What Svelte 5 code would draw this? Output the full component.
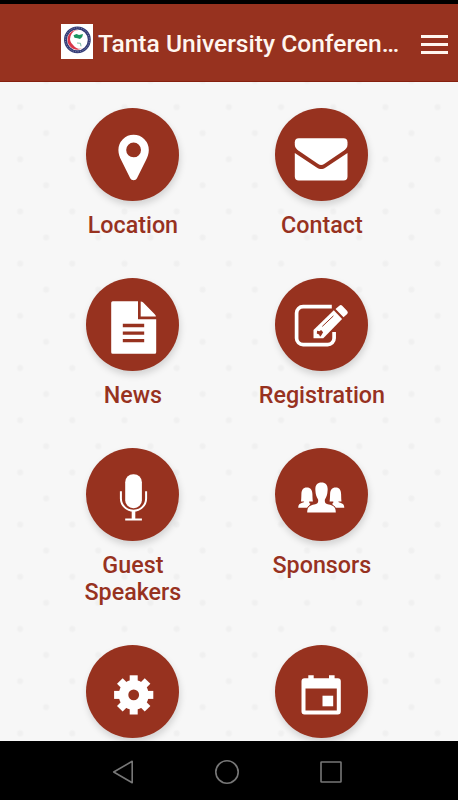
<script lang="ts">
	type Item = { label?: string; icon: string };

	const items: Item[] = [
		{ label: 'Location', icon: 'pin' },
		{ label: 'Contact', icon: 'mail' },
		{ label: 'News', icon: 'document' },
		{ label: 'Registration', icon: 'edit' },
		{ label: 'Guest Speakers', icon: 'mic' },
		{ label: 'Sponsors', icon: 'people' },
		{ icon: 'gear' },
		{ icon: 'calendar' }
	];

	const teeth = [0, 45, 90, 135];
</script>

<div class="screen">
	<div class="status"></div>
	<header>
		<svg class="logo" viewBox="0 0 32 35" aria-hidden="true">
			<rect width="32" height="35" fill="#fff" />
			<circle cx="16.4" cy="15.8" r="11.9" fill="none" stroke="#343c76" stroke-width="3" />
			<circle
				cx="16.4"
				cy="15.8"
				r="12"
				fill="none"
				stroke="#a3a8c8"
				stroke-width=".8"
				stroke-dasharray="1 1.5"
			/>
			<path
				d="M17.500 6a9.900 9.900 0 1 0 3.500 18.600a9 9 0 0 1-8.500-3.200a8.600 8.600 0 0 1 5-15.400z"
				fill="#d9364a"
			/>
			<path
				d="M12.500 11.300l3-1.200 2.500.8 4-1-.8 3-2.200 2.200-2.500-.8-3-.6z"
				fill="#1c9661"
			/>
			<path d="M16 19l3.500.3.5 3" fill="none" stroke="#55a78c" stroke-width=".8" />
		</svg>
		<h1>Tanta University Conferen…</h1>
		<button class="menu" aria-label="Menu">
			<span></span>
			<span></span>
			<span></span>
		</button>
	</header>

	<main>
		<div class="grid">
			{#each items as item (item.icon)}
				<a class="item" href="#{item.icon}">
					<span class="disc">
						<svg viewBox="-0.5 -0.5 93 93" fill="#fff" aria-hidden="true">
							{#if item.icon === 'pin'}
								<path
									fill-rule="evenodd"
									d="M31.900 41.500a15.200 15.200 0 0 1 30.400 0c0 4-1.300 7-3 10.500l-8.700 17.600c-1.500 3-5.500 3-7 0L34.900 52c-1.700-3.500-3-6.500-3-10.500zM47.100 34a7.400 7.400 0 1 0 0 14.800a7.400 7.400 0 0 0 0-14.800z"
								/>
							{:else if item.icon === 'mail'}
								<path
									d="M23.300 29.700h44.700a4 4 0 0 1 4 4v2.500c0 2.500-1.500 4.300-3.500 5.800L49 55.200c-2.500 1.600-4.200 1.600-6.700 0L22.800 42c-2-1.500-3.500-3.300-3.500-5.800v-2.500a4 4 0 0 1 4-4z"
								/>
								<path
									d="M19.300 44.400L41.200 58.900c3.300 2.200 5.700 2.200 9 0L72 44.400V68a4 4 0 0 1-4 4H23.300a4 4 0 0 1-4-4z"
								/>
							{:else if item.icon === 'document'}
								<path
									fill-rule="evenodd"
									d="M26.200 22.700h25.300v18h18.200v33.100a1.500 1.500 0 0 1-1.500 1.500h-42a1.500 1.500 0 0 1-1.500-1.500V24.200a1.500 1.500 0 0 1 1.500-1.500zM36.300 45.300v3.400h21.400v-3.400zM36.300 52.900v3.400h21.400v-3.400zM36.300 60.400v3.400h21.400v-3.400z"
								/>
								<path d="M54.200 22.900c1 0 1.800.5 2.500 1.200L68 35.400c.9.900 1.400 1.700 1.400 2.700H54.200z" />
							{:else if item.icon === 'edit'}
								<path
									d="M56.300 28.100H27.600a6.500 6.500 0 0 0-6.500 6.500v25.100a6.500 6.500 0 0 0 6.500 6.500h24.500a6.500 6.500 0 0 0 6.500-6.500v-6.200"
									fill="none"
									stroke="#fff"
									stroke-width="3.700"
								/>
								<path
									d="M63.800 27.200q1.500-1.400 2.900 0l5 5.300q1.300 1.500 0 2.900l-3.700 3.300-8-8.300z"
								/>
								<path d="M58.300 31.800l8.300 8.800L47.800 59.700H38v-8.200z" />
								<path
									d="M41.600 52.300l2.300.5 1.700-1.400 2 2.300-1.700 3-1.300 1.600-1-2.200-2.300-1.200z"
									fill="#97321f"
								/>
								<path d="M46.800 47.900L57.900 37.400" fill="none" stroke="#97321f" stroke-width="1" />
							{:else if item.icon === 'mic'}
								<rect x="38.700" y="25.700" width="16.700" height="34" rx="8" />
								<path
									d="M34.400 42.700v7.300a12.600 12.200 0 0 0 25.200 0v-7.300M38.700 71h16.700"
									fill="none"
									stroke="#fff"
									stroke-width="2"
								/>
								<path d="M45.200 62.400h3.600V71h-3.600z" />
							{:else if item.icon === 'people'}
								<path
									d="M31.300 39c3.900 0 5.400 2.700 5.600 6.400.1 3 .2 5.700.5 7.600h-3.700c-.2 1.200.3 1.900 1.300 2.300l-3 4h-9.300c0-3.200 1.500-4.400 4-5.100 1.400-.4 2-.6 1.900-1.200h-3.100c.3-1.800.3-4.600.4-7.600.2-3.700 1.600-6.400 5.400-6.400z"
								/>
								<path
									d="M60.200 39c-3.900 0-5.400 2.700-5.600 6.400-.1 3-.2 5.700-.5 7.600h3.700c.2 1.200-.3 1.900-1.300 2.300l3 4h9.300c0-3.200-1.500-4.400-4-5.100-1.400-.4-2-.6-1.900-1.200H66c-.3-1.800-.3-4.600-.4-7.600-.2-3.700-1.600-6.400-5.400-6.400z"
								/>
								<path
									d="M46 34c4.500 0 6.600 3 6.100 8-.2 3.800-1 6.600-2.700 8.900-.4 3.300.3 4.300 3.900 5.200 4.700 1.200 7 2.200 7 8H31.700c0-5.800 2.300-6.800 7-8 3.600-.9 4.300-1.900 3.900-5.200-1.700-2.300-2.500-5.100-2.700-8.900-.5-5 1.600-8 6.100-8z"
									stroke="#97321f"
									stroke-width="2"
									paint-order="stroke"
								/>
							{:else if item.icon === 'gear'}
								<circle cx="47.200" cy="49.400" r="15" />
								{#each teeth as angle}
									<rect
										x="43.200"
										y="29.800"
										width="8"
										height="39.200"
										transform="rotate({angle} 47.200 49.400)"
									/>
								{/each}
								<circle cx="47.200" cy="49.400" r="5.400" fill="#97321f" />
							{:else}
								<path d="M32.800 29.700h5.400v4h-5.400zM53.500 29.700h5.600v4h-5.600z" />
								<path
									fill-rule="evenodd"
									d="M29 32.700h33.300a3 3 0 0 1 3 3V66a3 3 0 0 1-3 3H29a3 3 0 0 1-3-3V35.700a3 3 0 0 1 3-3zM30 43v22h31.300V43z"
								/>
								<rect x="47" y="50.200" width="10.700" height="10.600" />
							{/if}
						</svg>
					</span>
					{#if item.label}
						<span class="label">{item.label}</span>
					{/if}
				</a>
			{/each}
		</div>
	</main>

	<nav>
		<svg viewBox="0 0 24 26" aria-label="Back">
			<path d="M2.700 13L21.200 2.300v21.400z" />
		</svg>
		<svg viewBox="0 0 24 26" aria-label="Home">
			<circle cx="12" cy="13" r="11.200" />
		</svg>
		<svg viewBox="0 0 24 26" aria-label="Recent apps">
			<rect x="2" y="3" width="20" height="20" rx=".6" />
		</svg>
	</nav>
</div>

<style>
	:global(body) {
		margin: 0;
		background: #000;
	}

	.screen {
		display: flex;
		flex-direction: column;
		width: 458px;
		height: 800px;
		overflow: hidden;
		background: #000;
		font-family: Roboto, sans-serif;
	}

	.status {
		flex: none;
		height: 4px;
	}

	header {
		display: flex;
		flex: none;
		align-items: center;
		box-sizing: border-box;
		height: 78px;
		padding: 0 10px 0 61px;
		background: #97321f;
		border-bottom: 1px solid #86200f;
	}

	.logo {
		flex: none;
		width: 32px;
		height: 35px;
		margin-bottom: 2px;
	}

	h1 {
		flex: 1;
		margin: 2px 0 0 5px;
		color: #fff6ef;
		font-size: 24.6px;
		font-weight: 500;
		line-height: 30px;
		white-space: nowrap;
	}

	.menu {
		display: flex;
		flex: none;
		flex-direction: column;
		gap: 5px;
		width: 27px;
		margin-top: 3px;
		padding: 0;
		border: 0;
		background: none;
	}

	.menu span {
		height: 3px;
		background: #fff6ef;
	}

	main {
		flex: 1;
		min-height: 0;
		overflow: hidden;
		background-color: #f7f7f7;
		background-image:
			radial-gradient(circle, #f0f0f0 2px, transparent 4px),
			radial-gradient(circle, #f0f0f0 2px, transparent 4px);
		background-position:
			-6px -1px,
			20px 25px;
		background-size: 52.2px 52.2px;
	}

	.grid {
		display: grid;
		grid-template-columns: 189px 189px;
		row-gap: 39px;
		padding: 26px 0 0 38.4px;
	}

	.item {
		display: flex;
		flex-direction: column;
		align-items: center;
		color: #97321f;
		text-decoration: none;
	}

	.disc {
		width: 93px;
		height: 93px;
		border-radius: 50%;
		background: #97321f;
		box-shadow: 1px 4px 7px rgba(0, 0, 0, 0.15);
	}

	.disc svg {
		display: block;
	}

	.label {
		max-width: 140px;
		margin-top: 11px;
		font-size: 23.3px;
		font-weight: 500;
		line-height: 27px;
		text-align: center;
	}

	nav {
		display: flex;
		flex: none;
		align-items: center;
		justify-content: center;
		gap: 80px;
		box-sizing: border-box;
		height: 59px;
		padding: 3px 4px 0 0;
	}

	nav svg {
		width: 24px;
		height: 26px;
		fill: none;
		stroke: #777;
		stroke-width: 1.6;
		stroke-linejoin: round;
	}
</style>
